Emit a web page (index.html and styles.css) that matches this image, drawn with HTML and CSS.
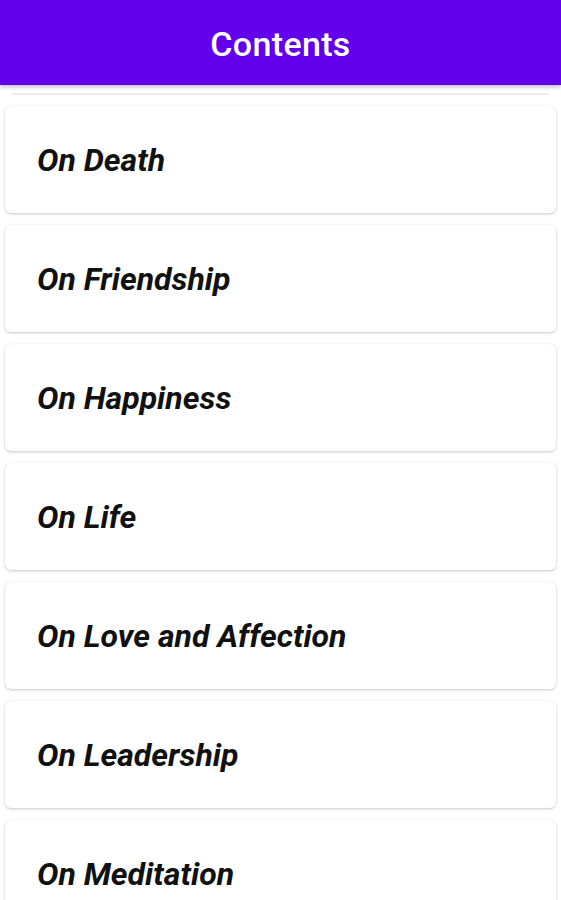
FILE: index.html
```html
<!DOCTYPE html>
<html lang="en">
<head>
    <meta charset="UTF-8">
    <meta name="viewport" content="width=device-width, initial-scale=1.0">
    <title>Contents</title>
    <link rel="stylesheet" href="styles.css">
</head>
<body>
    <header class="app-bar">
        <h1>Contents</h1>
    </header>
    <div class="list">
        <div class="scroll-edge"></div>
        <div class="card">On Death</div>
        <div class="card">On Friendship</div>
        <div class="card">On Happiness</div>
        <div class="card">On Life</div>
        <div class="card">On Love and Affection</div>
        <div class="card">On Leadership</div>
        <div class="card">On Meditation</div>
    </div>
</body>
</html>
```

FILE: styles.css
```css
body {
    margin: 0;
    padding: 0;
    background: #fff;
    font-family: Roboto, 'Liberation Sans', sans-serif;
    overflow: hidden;
    height: 900px;
}
.app-bar {
    height: 85px;
    background: #6200ee;
    display: flex;
    align-items: center;
    justify-content: center;
    box-shadow: 0 2px 4px rgba(0, 0, 0, 0.25);
    position: relative;
    z-index: 2;
}
.app-bar h1 {
    margin: 0;
    color: #fff;
    font-size: 34px;
    font-weight: 500;
    letter-spacing: 0.01em;
    padding-top: 2px;
}
.list {
    display: flex;
    flex-direction: column;
    gap: 12px;
    padding: 0 5px;
}
.scroll-edge {
    height: 2px;
    margin: 8px 7px -1px 7px;
    background: #ececec;
}
.card {
    height: 107px;
    background: #fff;
    border-radius: 6px;
    box-shadow: 0 1px 3px rgba(0, 0, 0, 0.22), 0 0 1px rgba(0, 0, 0, 0.08);
    display: flex;
    align-items: center;
    padding-left: 32px;
    font-size: 32px;
    font-weight: bold;
    font-style: italic;
    color: #111;
    flex-shrink: 0;
}
```
